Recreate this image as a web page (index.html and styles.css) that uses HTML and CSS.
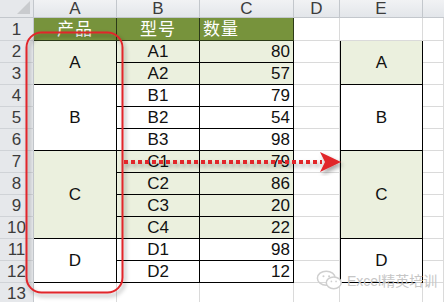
FILE: index.html
```html
<!DOCTYPE html>
<html lang="zh">
<head>
<meta charset="utf-8">
<link rel="stylesheet" href="styles.css">
</head>
<body>
<div class="page">
  <div class="sheet">
    <div class="corner"><span class="tri"></span></div>
    <div class="colh">A</div><div class="colh">B</div><div class="colh">C</div><div class="colh">D</div><div class="colh">E</div><div class="colh last"></div>

    <div class="rowh">1</div>
    <div class="cell head">产品</div><div class="cell head">型号</div><div class="cell head num-h">数量</div><div class="cell"></div><div class="cell"></div><div class="cell"></div>

    <div class="rowh">2</div>
    <div class="cell t g span2 mid">A</div><div class="cell t g">A1</div><div class="cell t g num">80</div><div class="cell"></div><div class="cell e g span2 mid">A</div><div class="cell"></div>
    <div class="rowh">3</div>
    <div class="cell t g">A2</div><div class="cell t g num">57</div><div class="cell"></div><div class="cell"></div>

    <div class="rowh">4</div>
    <div class="cell t span3 mid">B</div><div class="cell t">B1</div><div class="cell t num">79</div><div class="cell"></div><div class="cell e span3 mid">B</div><div class="cell"></div>
    <div class="rowh">5</div>
    <div class="cell t">B2</div><div class="cell t num">54</div><div class="cell"></div><div class="cell"></div>
    <div class="rowh">6</div>
    <div class="cell t">B3</div><div class="cell t num">98</div><div class="cell"></div><div class="cell"></div>

    <div class="rowh">7</div>
    <div class="cell t g span4 mid">C</div><div class="cell t g">C1</div><div class="cell t g num">79</div><div class="cell"></div><div class="cell e g span4 mid">C</div><div class="cell"></div>
    <div class="rowh">8</div>
    <div class="cell t g">C2</div><div class="cell t g num">86</div><div class="cell"></div><div class="cell"></div>
    <div class="rowh">9</div>
    <div class="cell t g">C3</div><div class="cell t g num">20</div><div class="cell"></div><div class="cell"></div>
    <div class="rowh">10</div>
    <div class="cell t g">C4</div><div class="cell t g num">22</div><div class="cell"></div><div class="cell"></div>

    <div class="rowh">11</div>
    <div class="cell t span2 mid">D</div><div class="cell t">D1</div><div class="cell t num">98</div><div class="cell"></div><div class="cell e span2 mid">D</div><div class="cell"></div>
    <div class="rowh">12</div>
    <div class="cell t">D2</div><div class="cell t num">12</div><div class="cell"></div><div class="cell"></div>

    <div class="rowh">13</div>
    <div class="cell"></div><div class="cell"></div><div class="cell"></div><div class="cell"></div><div class="cell"></div><div class="cell"></div>
  </div>

  <svg class="overlay" width="444" height="302" viewBox="0 0 444 302">
    <defs>
      <filter id="sh" x="-20%" y="-20%" width="140%" height="140%">
        <feDropShadow dx="2" dy="3" stdDeviation="2" flood-color="#000" flood-opacity="0.35"/>
      </filter>
    </defs>
    <rect x="26.5" y="32.5" width="96" height="260" rx="15" ry="15" fill="none" stroke="#e1262c" stroke-width="2" filter="url(#sh)"/>
    <g filter="url(#sh)">
      <line x1="124" y1="162" x2="322" y2="162" stroke="#e1262c" stroke-width="4" stroke-dasharray="4 3"/>
      <path d="M320 152 L341 162 L320 172 L325 162 Z" fill="#e1262c"/>
    </g>
  </svg>

  <div class="mark">
    <svg class="wx" width="28" height="22" viewBox="0 0 30 22">
      <ellipse cx="11" cy="9" rx="9.5" ry="7.5" fill="none" stroke="#cfcfcf" stroke-width="1.6"/>
      <ellipse cx="19" cy="14" rx="8" ry="6.3" fill="#fff" stroke="#cfcfcf" stroke-width="1.6"/>
      <circle cx="8" cy="7" r="1.1" fill="#cfcfcf"/>
      <circle cx="14" cy="7" r="1.1" fill="#cfcfcf"/>
      <circle cx="16.5" cy="12.5" r="0.9" fill="#cfcfcf"/>
      <circle cx="21.5" cy="12.5" r="0.9" fill="#cfcfcf"/>
    </svg>
    <span class="mark-text">Excel精英培训</span>
  </div>
</div>
</body>
</html>
```

FILE: styles.css
```css
html, body {
  margin: 0;
  padding: 0;
  background: #ffffff;
}
body {
  width: 444px;
  height: 302px;
  overflow: hidden;
  font-family: "Liberation Sans", "Noto Sans CJK SC", Arial, sans-serif;
}
.page {
  position: relative;
  width: 444px;
  height: 302px;
  overflow: hidden;
}
.sheet {
  display: grid;
  grid-template-columns: 34px 83px 83px 94px 46px 83px 21px;
  grid-template-rows: 18px 23px repeat(12, 22px);
}
.sheet > div {
  box-sizing: border-box;
}
.corner {
  background: #e6e8eb;
  border-right: 1px solid #c3c7cc;
  border-bottom: 1px solid #c3c7cc;
  position: relative;
}
.tri {
  position: absolute;
  right: 3px;
  bottom: 3px;
  width: 0;
  height: 0;
  border-left: 13px solid transparent;
  border-bottom: 13px solid #c9cbce;
}
.colh {
  background: linear-gradient(#f1f2f4, #e3e6ea);
  border-right: 1px solid #c3c7cc;
  border-bottom: 1px solid #c3c7cc;
  color: #3c3c3c;
  font-size: 17px;
  display: flex;
  align-items: center;
  justify-content: center;
  line-height: 1;
}
.colh.last {
  border-right: none;
}
.rowh {
  background: #e6e8eb;
  border-right: 1px solid #c3c7cc;
  border-bottom: 1px solid #d0d3d7;
  color: #3c3c3c;
  font-size: 17px;
  display: flex;
  align-items: center;
  justify-content: center;
  line-height: 1;
}
.cell {
  border-right: 1px solid #dadada;
  border-bottom: 1px solid #dadada;
  display: flex;
  align-items: center;
  justify-content: center;
  font-size: 17px;
  color: #111;
  line-height: 1;
}
.head {
  background: #77933c;
  color: #ffffff;
  border-right: 1px solid #2c3a18;
  border-bottom: 1px solid #2c3a18;
  font-size: 17px;
  letter-spacing: 1px;
}
.num-h {
  justify-content: flex-start;
  padding-left: 3px;
}
.t {
  border-right: 1px solid #000;
  border-bottom: 1px solid #000;
}
.e {
  border: 1px solid #000;
  border-top: none;
}
.span2 { grid-row: span 2; }
.span3 { grid-row: span 3; }
.span4 { grid-row: span 4; }
.g {
  background: #ebf0de;
}
.num {
  justify-content: flex-end;
  padding-right: 3px;
}
.mid {
  font-size: 17px;
}
.overlay {
  position: absolute;
  left: 0;
  top: 0;
  pointer-events: none;
}
.mark {
  position: absolute;
  left: 316px;
  top: 269px;
  display: flex;
  align-items: center;
  gap: 3px;
}
.mark-text {
  color: #c6c6c6;
  font-size: 14px;
  font-family: "Liberation Sans", "Noto Sans CJK SC", sans-serif;
  white-space: nowrap;
}
```
